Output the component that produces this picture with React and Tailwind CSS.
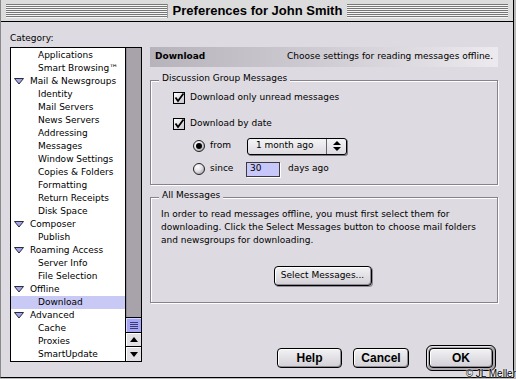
import { ChevronUp } from "lucide-react";

const geneva = { fontFamily: '"DejaVu Sans", Verdana, sans-serif' };
const charcoal = { fontFamily: '"Liberation Sans", Arial, sans-serif' };

const categories = [
  { t: "Applications", l: 1 },
  { t: "Smart Browsing™", l: 1 },
  { t: "Mail & Newsgroups", l: 0 },
  { t: "Identity", l: 1 },
  { t: "Mail Servers", l: 1 },
  { t: "News Servers", l: 1 },
  { t: "Addressing", l: 1 },
  { t: "Messages", l: 1 },
  { t: "Window Settings", l: 1 },
  { t: "Copies & Folders", l: 1 },
  { t: "Formatting", l: 1 },
  { t: "Return Receipts", l: 1 },
  { t: "Disk Space", l: 1 },
  { t: "Composer", l: 0 },
  { t: "Publish", l: 1 },
  { t: "Roaming Access", l: 0 },
  { t: "Server Info", l: 1 },
  { t: "File Selection", l: 1 },
  { t: "Offline", l: 0 },
  { t: "Download", l: 1, sel: true },
  { t: "Advanced", l: 0 },
  { t: "Cache", l: 1 },
  { t: "Proxies", l: 1 },
  { t: "SmartUpdate", l: 1 },
];

function Triangle() {
  return (
    <svg width="10" height="7" viewBox="0 0 10 7" className="shrink-0">
      <polygon points="0.5,0.5 9.5,0.5 5,6" fill="#a4a4ec" stroke="#2a2a3a" strokeWidth="1" />
    </svg>
  );
}

function CategoryRow({ item }) {
  return (
    <div
      className={`h-[13px] flex items-center text-[9px] leading-[13px] text-black whitespace-nowrap ${
        item.sel ? "bg-[#c9c9f5]" : ""
      } ${item.l === 0 ? "pl-[3px]" : "pl-[27px]"}`}
    >
      {item.l === 0 && <Triangle />}
      <span className={item.l === 0 ? "ml-[6px]" : ""}>{item.t}</span>
    </div>
  );
}

function Checkbox() {
  return (
    <div className="w-[12px] h-[12px] shrink-0 border border-black bg-gradient-to-br from-white to-[#c8c6cc] relative">
      <svg width="12" height="12" viewBox="0 0 12 12" className="absolute -left-[1px] -top-[1px]">
        <path d="M2.5 5.5 L5 9 L10.5 1.5" fill="none" stroke="#000" strokeWidth="1.8" />
      </svg>
    </div>
  );
}

function Radio({ on }) {
  return (
    <div className="w-[12px] h-[12px] shrink-0 rounded-full border border-[#222] bg-[radial-gradient(circle_at_35%_30%,#ffffff_0%,#e2e0e6_45%,#8d8a92_100%)] flex items-center justify-center">
      {on && <div className="w-[6px] h-[6px] rounded-full bg-black" />}
    </div>
  );
}

function MacButton({ children, w, isDefault }) {
  const btn = (
    <div
      className={`${w} h-[20px] rounded-[4px] border border-black bg-gradient-to-b from-[#f2f1f4] to-[#d2d0d6] shadow-[inset_1px_1px_0_#fff,inset_-1px_-1px_0_#8e8b94] flex items-center justify-center text-[12px] font-bold text-black`}
      style={charcoal}
    >
      {children}
    </div>
  );
  if (!isDefault) return btn;
  return (
    <div className="p-[2px] rounded-[6px] border border-black bg-[#a9a6ad] shadow-[inset_1px_1px_0_#e6e4e8]">
      {btn}
    </div>
  );
}

function GroupBox({ label, h, children }) {
  return (
    <div className={`${h} border border-[#86838c] shadow-[1px_1px_0_#fff,inset_1px_1px_0_#fff] flex flex-col`}>
      <div className="-mt-[9px] ml-[8px] self-start px-[3px] bg-[#dddae1] text-[9px] leading-[12px] h-[12px]">
        {label}
      </div>
      {children}
    </div>
  );
}

export default function App() {
  return (
    <div className="w-[516px] h-[379px] bg-[#b9b9b9] overflow-hidden relative" style={geneva}>
      <div className="w-[514px] h-[378px] bg-[#dddae1] border-l border-l-[#8a8a8a] border-r border-b border-black flex flex-col">
        {/* title bar */}
        <div className="h-[22px] shrink-0 bg-[#dcdcdc] border-b border-black flex items-center px-[5px]">
          <div className="flex-1 h-[14px] bg-[repeating-linear-gradient(#777_0_1px,#f6f6f6_1px_2px)] border-r border-[#999]" />
          <div className="px-[5px] text-[13px] font-bold text-black leading-[16px]" style={charcoal}>
            Preferences for John Smith
          </div>
          <div className="flex-1 h-[14px] bg-[repeating-linear-gradient(#777_0_1px,#f6f6f6_1px_2px)]" />
        </div>

        <div className="flex flex-1 pl-[9px]">
          {/* category list */}
          <div className="w-[132px] pt-[10px] flex flex-col">
            <div className="h-[12px] leading-[12px] text-[9px] text-black">Category:</div>
            <div className="mt-[3px] h-[315px] border border-black flex">
              <div className="flex-1 bg-white pt-[1px] overflow-hidden">
                {categories.map((c) => (
                  <CategoryRow key={c.t} item={c} />
                ))}
              </div>
              <div className="w-[16px] border-l border-black flex flex-col">
                <div className="flex-1 bg-[#a8a3ab] shadow-[inset_1px_0_0_#8f8a93]" />
                <div className="h-[16px] bg-[#a6a6f2] border-y border-black flex flex-col items-center justify-center gap-[1px] shadow-[inset_1px_1px_0_#d6d6ff]">
                  <div className="w-[8px] h-[1px] bg-[#3a3a7a]" />
                  <div className="w-[8px] h-[1px] bg-[#3a3a7a]" />
                  <div className="w-[8px] h-[1px] bg-[#3a3a7a]" />
                  <div className="w-[8px] h-[1px] bg-[#3a3a7a]" />
                </div>
                <div className="h-[14px] bg-[#e2dfe5] border-b border-black flex items-center justify-center shadow-[inset_1px_1px_0_#fff]">
                  <svg width="8" height="5" viewBox="0 0 8 5">
                    <polygon points="0,5 8,5 4,0" fill="#000" />
                  </svg>
                </div>
                <div className="h-[14px] bg-[#e2dfe5] flex items-center justify-center shadow-[inset_1px_1px_0_#fff]">
                  <svg width="8" height="5" viewBox="0 0 8 5">
                    <polygon points="0,0 8,0 4,5" fill="#000" />
                  </svg>
                </div>
              </div>
            </div>
          </div>

          {/* settings panel */}
          <div className="w-[348px] ml-[8px] pt-[25px] flex flex-col text-[9px] text-black">
            <div className="h-[20px] bg-gradient-to-r from-[#b6b3ba] via-[#cfccd3] to-[#eceaee] flex items-center justify-between px-[5px]">
              <span className="font-bold">Download</span>
              <span>Choose settings for reading messages offline.</span>
            </div>

            <div className="mt-[13px]">
              <GroupBox label="Discussion Group Messages" h="h-[105px]">
                <div className="mt-[7px] h-[14px] flex items-center pl-[22px] gap-[5px]">
                  <Checkbox />
                  <span>Download only unread messages</span>
                </div>
                <div className="mt-[12px] h-[14px] flex items-center pl-[22px] gap-[5px]">
                  <Checkbox />
                  <span>Download by date</span>
                </div>
                <div className="mt-[6px] h-[18px] flex items-center pl-[42px]">
                  <div className="w-[54px] flex items-center gap-[5px]">
                    <Radio on />
                    <span>from</span>
                  </div>
                  <div className="w-[100px] h-[17px] rounded-[3px] border border-black bg-gradient-to-b from-[#f4f3f6] to-[#dddbe0] shadow-[1px_1px_0_#7c7982] flex items-center">
                    <span className="flex-1 pl-[8px]">1 month ago</span>
                    <div className="w-[20px] h-full border-l border-[#666] flex flex-col items-center justify-center gap-[2px]">
                      <svg width="8" height="4" viewBox="0 0 8 4">
                        <polygon points="0,4 8,4 4,0" fill="#000" />
                      </svg>
                      <svg width="8" height="4" viewBox="0 0 8 4">
                        <polygon points="0,0 8,0 4,4" fill="#000" />
                      </svg>
                    </div>
                  </div>
                </div>
                <div className="mt-[6px] h-[16px] flex items-center pl-[42px]">
                  <div className="w-[53px] flex items-center gap-[5px]">
                    <Radio />
                    <span>since</span>
                  </div>
                  <div className="w-[34px] h-[15px] border border-[#3c3a40] bg-[#c7c7f9] shadow-[1px_1px_0_#fff] flex items-center pl-[3px]">
                    30
                  </div>
                  <span className="ml-[8px]">days ago</span>
                </div>
              </GroupBox>
            </div>

            <div className="mt-[12px]">
              <GroupBox label="All Messages" h="h-[106px]">
                <p className="mt-[7px] pl-[10px] leading-[13px] whitespace-nowrap">
                  In order to read messages offline, you must first select them for
                  <br />
                  downloading. Click the Select Messages button to choose mail folders
                  <br />
                  and newsgroups for downloading.
                </p>
                <div className="mt-[19px] flex justify-center pr-[3px]">
                  <div className="w-[98px] h-[20px] rounded-[4px] border border-black bg-gradient-to-b from-[#f2f1f4] to-[#d2d0d6] shadow-[inset_1px_1px_0_#fff,inset_-1px_-1px_0_#8e8b94,1px_1px_0_#8e8b94] flex items-center justify-center">
                    Select Messages...
                  </div>
                </div>
              </GroupBox>
            </div>

            <div className="mt-[42px] flex items-center justify-end pr-[2px]">
              <MacButton w="w-[65px]">Help</MacButton>
              <div className="ml-[11px]">
                <MacButton w="w-[56px]">Cancel</MacButton>
              </div>
              <div className="ml-[17px]">
                <MacButton w="w-[64px]" isDefault>
                  OK
                </MacButton>
              </div>
            </div>
          </div>
        </div>
      </div>
      <div
        className="absolute right-0 bottom-0 text-[10px] leading-[11px] text-black [text-shadow:0_0_2px_#fff,0_0_1px_#fff]"
        style={charcoal}
      >
        © JL Meller
      </div>
    </div>
  );
}
